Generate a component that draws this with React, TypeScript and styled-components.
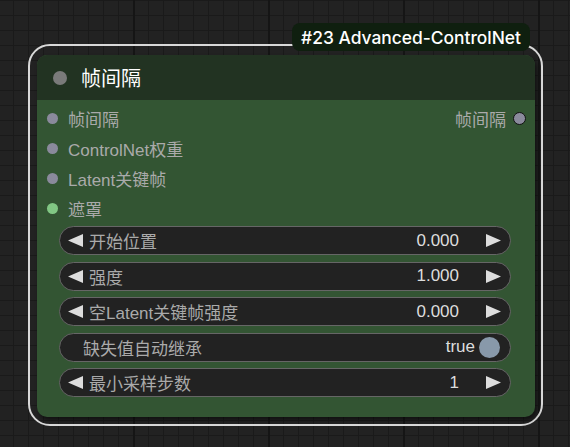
import { FC } from "react";
import styled, { createGlobalStyle } from "styled-components";

const GlobalStyle = createGlobalStyle`
  html, body {
    margin: 0;
    padding: 0;
    background: #222;
  }
`;

type Slot = { name: string; color: string };

const inputs: Slot[] = [
  { name: "帧间隔", color: "#8a8a9c" },
  { name: "ControlNet权重", color: "#8a8a9c" },
  { name: "Latent关键帧", color: "#8a8a9c" },
  { name: "遮罩", color: "#81c784" },
];

type Widget =
  | { kind: "number"; label: string; value: string }
  | { kind: "toggle"; label: string; value: boolean };

const widgets: Widget[] = [
  { kind: "number", label: "开始位置", value: "0.000" },
  { kind: "number", label: "强度", value: "1.000" },
  { kind: "number", label: "空Latent关键帧强度", value: "0.000" },
  { kind: "toggle", label: "缺失值自动继承", value: true },
  { kind: "number", label: "最小采样步数", value: "1" },
];

const Arrow: FC<{ dir: "left" | "right" }> = ({ dir }) => (
  <ArrowIcon width="15" height="13" viewBox="0 0 15 13">
    {dir === "left" ? (
      <polygon points="15,0 15,13 0,6.5" fill="#ddd" />
    ) : (
      <polygon points="0,0 0,13 15,6.5" fill="#ddd" />
    )}
  </ArrowIcon>
);

export default function App() {
  return (
    <>
      <GlobalStyle />
      <Canvas>
        <Selection>
          <Badge>#23 Advanced-ControlNet</Badge>
          <Node>
            <TitleBar>
              <TitleDot />
              <Title>帧间隔</Title>
            </TitleBar>
            <Body>
              <Slots>
                {inputs.map((s, i) => (
                  <SlotRow key={s.name}>
                    <Dot $color={s.color} />
                    <SlotLabel>{s.name}</SlotLabel>
                    {i === 0 && (
                      <Output>
                        <SlotLabel>帧间隔</SlotLabel>
                        <OutDot />
                      </Output>
                    )}
                  </SlotRow>
                ))}
              </Slots>
              <Widgets>
                {widgets.map((w) =>
                  w.kind === "number" ? (
                    <Pill key={w.label}>
                      <Arrow dir="left" />
                      <WidgetLabel>{w.label}</WidgetLabel>
                      <WidgetValue>{w.value}</WidgetValue>
                      <Arrow dir="right" />
                    </Pill>
                  ) : (
                    <Pill key={w.label} $toggle>
                      <WidgetLabel>{w.label}</WidgetLabel>
                      <WidgetValue>{w.value ? "true" : "false"}</WidgetValue>
                      <Knob />
                    </Pill>
                  )
                )}
              </Widgets>
            </Body>
          </Node>
        </Selection>
      </Canvas>
    </>
  );
}

const Canvas = styled.div`
  width: 570px;
  height: 447px;
  box-sizing: border-box;
  padding: 44px 0 0 28px;
  background-color: #222;
  background-image:
    linear-gradient(to right, #151515 2px, transparent 2px),
    linear-gradient(to right, #1a1a1a 1px, transparent 1px),
    linear-gradient(to bottom, #1a1a1a 1px, transparent 1px);
  background-size: 135px 100%, 15px 15px, 15px 15px;
  background-position: 133px 0, 13px 0, 0 0;
  font-family: Arial, "Liberation Sans", "Noto Sans CJK SC", sans-serif;
  overflow: hidden;
`;

const Selection = styled.div`
  position: relative;
  width: 515px;
  height: 382px;
  box-sizing: border-box;
  border: 2px solid #d8d8d8;
  border-radius: 22px;
  padding: 9px 6px 7px 7px;
`;

const Badge = styled.div`
  position: absolute;
  top: -23px;
  right: 11px;
  height: 28px;
  padding: 0 9px;
  display: flex;
  align-items: center;
  background: #0f1f0f;
  border-radius: 8px;
  color: #fff;
  font-family: Inter, "Liberation Sans", sans-serif;
  font-weight: 500;
  font-size: 17.4px;
  white-space: nowrap;
`;

const Node = styled.div`
  height: 100%;
  display: flex;
  flex-direction: column;
  border-radius: 10px;
  overflow: hidden;
  background: #335533;
  box-shadow: 2px 3px 4px rgba(0, 0, 0, 0.5);
`;

const TitleBar = styled.div`
  height: 45px;
  flex: none;
  display: flex;
  align-items: center;
  padding-left: 16px;
  background: #223322;
`;

const TitleDot = styled.span`
  width: 14px;
  height: 14px;
  border-radius: 50%;
  background: #7a7a7a;
`;

const Title = styled.span`
  margin-left: 14px;
  color: #fff;
  font-size: 20px;
`;

const Body = styled.div`
  padding: 3px 0 0 22px;
  display: flex;
  flex-direction: column;
`;

const Slots = styled.div`
  margin-left: -12px;
  display: flex;
  flex-direction: column;
`;

const SlotRow = styled.div`
  height: 30px;
  display: flex;
  align-items: center;
  padding-right: 9px;
`;

const Dot = styled.span<{ $color: string }>`
  width: 11px;
  height: 11px;
  border-radius: 50%;
  background: ${(p) => p.$color};
  margin-right: 10px;
`;

const SlotLabel = styled.span`
  color: #aaa;
  font-size: 17px;
`;

const Output = styled.div`
  margin-left: auto;
  display: flex;
  align-items: center;
  gap: 7px;
`;

const OutDot = styled.span`
  width: 11px;
  height: 11px;
  border-radius: 50%;
  background: #8a8a9c;
  border: 1.5px solid #111;
`;

const Widgets = styled.div`
  margin-top: 3px;
  width: 452px;
  display: flex;
  flex-direction: column;
  gap: 6.5px;
`;

const Pill = styled.div<{ $toggle?: boolean }>`
  height: 29px;
  box-sizing: border-box;
  display: flex;
  align-items: center;
  padding: 0 ${(p) => (p.$toggle ? "10px" : "9px")} 0 ${(p) => (p.$toggle ? "23px" : "8px")};
  background: #222;
  border: 1px solid #666;
  border-radius: 15px;
`;

const ArrowIcon = styled.svg`
  flex: none;
  &:first-child {
    margin-right: 6px;
  }
  &:last-child {
    margin-left: 27px;
  }
`;

const WidgetLabel = styled.span`
  color: #aaa;
  font-size: 17px;
`;

const WidgetValue = styled.span`
  margin-left: auto;
  color: #ddd;
  font-size: 17px;
`;

const Knob = styled.span`
  width: 21px;
  height: 21px;
  border-radius: 50%;
  background: #8899aa;
  margin-left: 4px;
`;
